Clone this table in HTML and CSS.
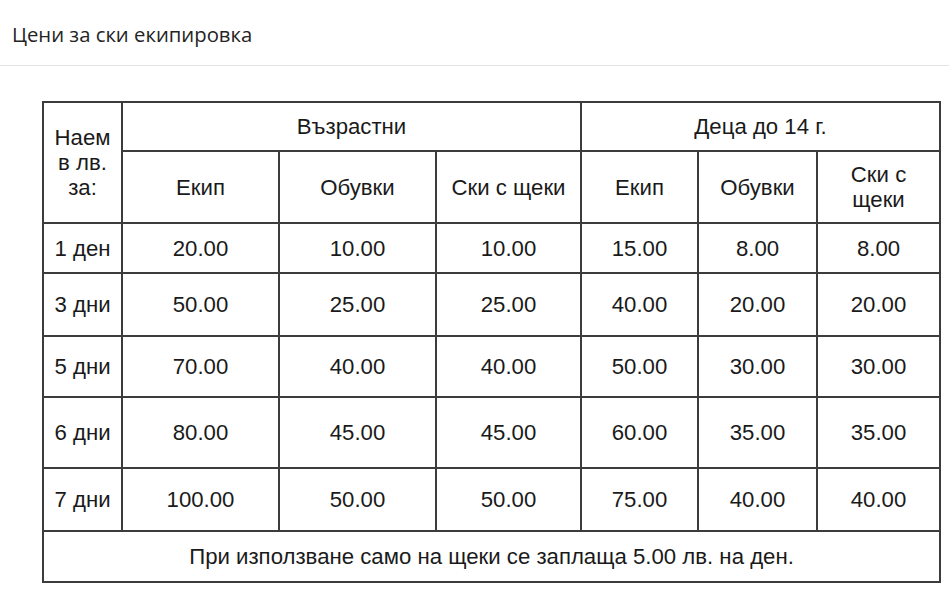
FILE: index.html
```html
<!DOCTYPE html>
<html lang="bg">
<head>
<meta charset="utf-8">
<title>Цени за ски екипировка</title>
<link rel="stylesheet" href="styles.css">
</head>
<body>
<header class="page-header">
  <h1 class="page-title">Цени за ски екипировка</h1>
</header>
<main class="content">
  <table class="prices">
    <colgroup>
      <col class="c-period">
      <col class="c-a1">
      <col class="c-a2">
      <col class="c-a3">
      <col class="c-k1">
      <col class="c-k2">
      <col class="c-k3">
    </colgroup>
    <thead>
      <tr class="r-group">
        <th rowspan="2" class="lead">Наем в лв. за:</th>
        <th colspan="3">Възрастни</th>
        <th colspan="3">Деца до 14 г.</th>
      </tr>
      <tr class="r-sub">
        <th>Екип</th>
        <th>Обувки</th>
        <th>Ски с щеки</th>
        <th>Екип</th>
        <th>Обувки</th>
        <th class="narrow">Ски с щеки</th>
      </tr>
    </thead>
    <tbody>
      <tr class="r1"><td>1 ден</td><td>20.00</td><td>10.00</td><td>10.00</td><td>15.00</td><td>8.00</td><td>8.00</td></tr>
      <tr class="r2"><td>3 дни</td><td>50.00</td><td>25.00</td><td>25.00</td><td>40.00</td><td>20.00</td><td>20.00</td></tr>
      <tr class="r3"><td>5 дни</td><td>70.00</td><td>40.00</td><td>40.00</td><td>50.00</td><td>30.00</td><td>30.00</td></tr>
      <tr class="r4"><td>6 дни</td><td>80.00</td><td>45.00</td><td>45.00</td><td>60.00</td><td>35.00</td><td>35.00</td></tr>
      <tr class="r5"><td>7 дни</td><td>100.00</td><td>50.00</td><td>50.00</td><td>75.00</td><td>40.00</td><td>40.00</td></tr>
      <tr class="r-note"><td colspan="7">При използване само на щеки се заплаща 5.00 лв. на ден.</td></tr>
    </tbody>
  </table>
</main>
</body>
</html>
```
FILE: styles.css
```css
html, body {
  margin: 0;
  padding: 0;
  background: #ffffff;
}

.page-header {
  height: 66px;
  box-sizing: border-box;
  border-bottom: 1px solid #e3e3e3;
  padding: 20px 12px 0;
}

.page-title {
  margin: 0;
  font-family: "Open Sans", "Noto Sans", sans-serif;
  font-weight: 400;
  font-size: 20.3px;
  line-height: 28px;
  color: #242424;
}

.content {
  padding: 35px 0 0 42px;
}

.prices {
  border-collapse: collapse;
  table-layout: fixed;
  width: 897px;
  font-family: "Liberation Sans", Arial, sans-serif;
  font-size: 22.2px;
  line-height: 25px;
  color: #1a1a1a;
}

.prices th,
.prices td {
  border: 2px solid #3c3c3c;
  padding: 0 4px;
  text-align: center;
  vertical-align: middle;
  font-weight: 400;
}

.c-period { width: 79px; }
.c-a1 { width: 157px; }
.c-a2 { width: 157px; }
.c-a3 { width: 145px; }
.c-k1 { width: 117px; }
.c-k2 { width: 119px; }
.c-k3 { width: 123px; }

.r-group { height: 49px; }
.r-sub { height: 72px; }
.r1 { height: 50px; }
.r2 { height: 63px; }
.r3 { height: 61px; }
.r4 { height: 71px; }
.r5 { height: 63px; }
.r-note { height: 51px; }

.prices .lead { padding: 0 8px; }
.prices .narrow { padding: 0 20px; }
```
